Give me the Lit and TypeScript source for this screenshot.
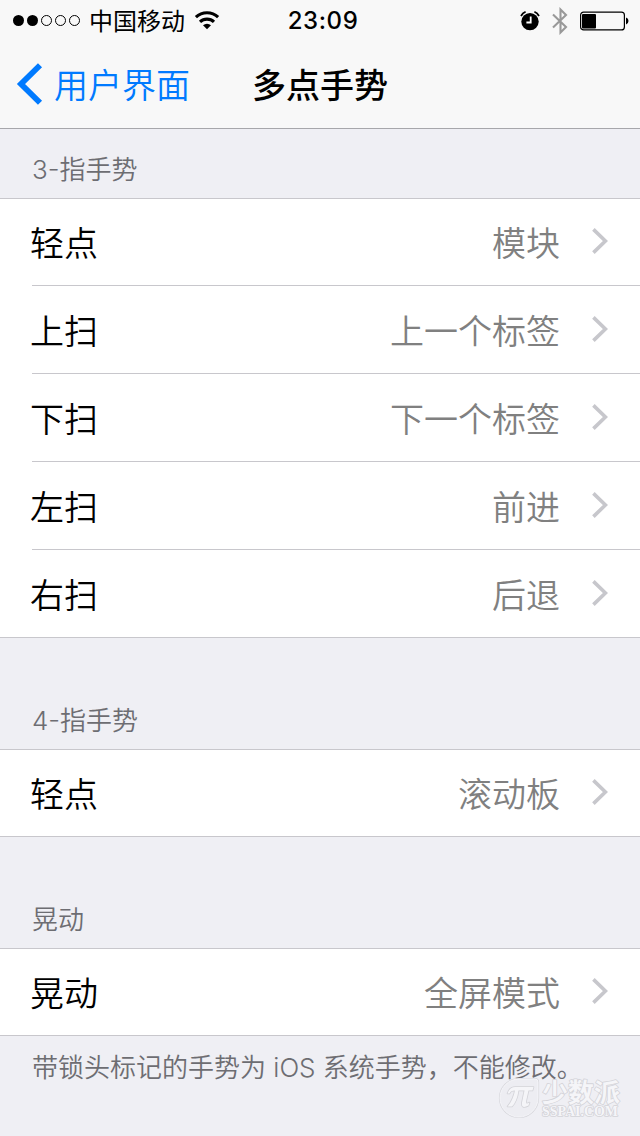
import { LitElement, html, css, svg } from "lit";
import { customElement, property } from "lit/decorators.js";

interface Gesture {
  label: string;
  value: string;
}

interface Section {
  title: string;
  rows: Gesture[];
  note?: string;
}

const SECTIONS: Section[] = [
  {
    title: "3-指手势",
    rows: [
      { label: "轻点", value: "模块" },
      { label: "上扫", value: "上一个标签" },
      { label: "下扫", value: "下一个标签" },
      { label: "左扫", value: "前进" },
      { label: "右扫", value: "后退" },
    ],
  },
  { title: "4-指手势", rows: [{ label: "轻点", value: "滚动板" }] },
  {
    title: "晃动",
    rows: [{ label: "晃动", value: "全屏模式" }],
    note: "带锁头标记的手势为 iOS 系统手势，不能修改。",
  },
];

@customElement("status-bar")
class StatusBar extends LitElement {
  static styles = css`
    :host {
      display: grid;
      grid-template-columns: 1fr auto 1fr;
      align-items: center;
      height: 40px;
      padding: 0 11px 0 13px;
      color: #000;
    }
    .left,
    .right {
      display: flex;
      align-items: center;
    }
    .right {
      justify-content: flex-end;
      padding-top: 1px;
    }
    svg {
      display: block;
      flex: none;
    }
    .carrier {
      margin: 0 9px 0 8px;
      font-size: 24px;
      line-height: 40px;
      white-space: nowrap;
    }
    .time {
      padding: 2px 0 0 4px;
      font-family: Inter, "Liberation Sans", sans-serif;
      font-size: 24px;
      font-weight: 500;
      line-height: 38px;
      letter-spacing: 0.6px;
    }
    .alarm {
      margin-right: 12px;
    }
    .bluetooth {
      margin-right: 12px;
    }
  `;

  render() {
    return html`
      <div class="left">
        <svg width="68" height="12" viewBox="0 0 68 12">
          ${[0, 1, 2, 3, 4].map((i) =>
            i < 2
              ? svg`<circle cx=${5.5 + i * 14} cy="6.5" r="5.5" />`
              : svg`<circle cx=${5.5 + i * 14} cy="6.5" r="5" fill="none" stroke="#000" />`
          )}
        </svg>
        <span class="carrier">中国移动</span>
        <svg width="26" height="20" viewBox="0 0 26 20">
          <g fill="none" stroke="#000" stroke-width="3.1">
            <path d="M1.9 7.2a16 16 0 0 1 22.2 0" />
            <path d="M6 11.9a10.2 10.2 0 0 1 14 0" />
          </g>
          <path d="M9 15.2a6 6 0 0 1 8 0L13 19.2z" />
        </svg>
      </div>
      <span class="time">23:09</span>
      <div class="right">
        <svg class="alarm" width="20" height="20" viewBox="0 0 20 20">
          <circle cx="10" cy="10.6" r="8.7" />
          <path d="M1 5a10 10 0 0 1 4.600-4.200M19 5a10 10 0 0 0-4.600-4.200" fill="none" stroke="#000" stroke-width="1.8" />
          <path d="M10.700 5.500v6H6.400" fill="none" stroke="#fff" stroke-width="1.8" />
        </svg>
        <svg class="bluetooth" width="16" height="28" viewBox="0 0 16 28">
          <path d="M1 7.500L14 20l-5.500 5.500V2.500L14 8 1 20.500" fill="none" stroke="#999" stroke-width="2.1" />
        </svg>
        <svg width="49" height="20" viewBox="0 0 49 20">
          <rect x="0.6" y="1.100" width="43.8" height="17.8" rx="3" fill="none" stroke="#000" stroke-width="1.2" />
          <rect x="2" y="3" width="14" height="14.5" rx="1" />
          <path d="M46 6.5a3.7 3.7 0 0 1 0 7z" />
        </svg>
      </div>
    `;
  }
}

@customElement("nav-bar")
class NavBar extends LitElement {
  static styles = css`
    :host {
      display: grid;
      grid-template-columns: 1fr auto 1fr;
      align-items: center;
      height: 88px;
      padding: 0 16px;
      font-size: 34px;
      line-height: 88px;
      white-space: nowrap;
    }
    .back {
      display: flex;
      align-items: center;
      gap: 11px;
      font-weight: 350;
      color: #007aff;
    }
    svg {
      display: block;
    }
    .title {
      font-weight: 500;
      color: #000;
    }
  `;

  @property() back = "";
  @property() heading = "";

  render() {
    return html`
      <div class="back">
        <svg width="27" height="42" viewBox="0 0 27 42">
          <path d="M24 2.200L5 21l19 18.800" fill="none" stroke="currentColor" stroke-width="5.8" />
        </svg>
        <span>${this.back}</span>
      </div>
      <span class="title">${this.heading}</span>
    `;
  }
}

@customElement("gesture-section")
class GestureSection extends LitElement {
  static styles = css`
    :host {
      display: block;
    }
    .title {
      padding-left: 32px;
      font-size: 26px;
      line-height: 38px;
      color: #6d6d72;
    }
    .title,
    .note {
      font-family: Inter, "Noto Sans CJK SC", sans-serif;
      font-weight: 350;
    }
    .rows {
      margin-top: 9px;
      box-sizing: border-box;
      border-top: 1px solid #c8c7cc;
      border-bottom: 1px solid #c8c7cc;
      background: #fff;
    }
    .row {
      display: flex;
      align-items: center;
      box-sizing: border-box;
      height: 88px;
      margin-left: 32px;
      padding-right: 32px;
      border-bottom: 1px solid #c8c7cc;
      font-size: 34px;
      line-height: 86px;
    }
    .row:first-child {
      height: 87px;
    }
    .row:last-child {
      height: 87px;
      border-bottom: 0;
    }
    .row:only-child {
      height: 86px;
    }
    .label {
      flex: 1;
      margin-left: -2px;
      font-weight: 350;
      color: #000;
    }
    .value {
      margin-right: 32px;
      font-weight: 350;
      color: #808080;
    }
    svg {
      display: block;
      margin-bottom: 2px;
    }
    .note {
      padding: 13px 0 0 32px;
      font-size: 26px;
      line-height: 38px;
      color: #6d6d72;
      white-space: nowrap;
    }
  `;

  @property({ attribute: false }) section!: Section;

  render() {
    const { title, rows, note } = this.section;
    return html`
      <div class="title">${title}</div>
      <div class="rows">
        ${rows.map(
          (r) => html`
            <div class="row">
              <span class="label">${r.label}</span>
              <span class="value">${r.value}</span>
              <svg width="16" height="26" viewBox="0 0 16 26">
                <path d="M1.4 1.4L13.4 13l-12 11.6" fill="none" stroke="#c7c7cc" stroke-width="3.6" />
              </svg>
            </div>
          `
        )}
      </div>
      ${note ? html`<div class="note">${note}</div>` : null}
    `;
  }
}

@customElement("site-watermark")
class SiteWatermark extends LitElement {
  static styles = css`
    :host {
      display: block;
    }
    svg {
      display: block;
      overflow: visible;
    }
    .mark {
      fill: #f5f5f8;
      stroke: #d3d3d8;
      stroke-width: 1.6px;
      stroke-linejoin: round;
      paint-order: stroke;
    }
    .badge {
      fill: #ededf2;
      stroke: #d6d6db;
      stroke-width: 2.2px;
    }
    .rim {
      fill: none;
      stroke: #f6f6f9;
      stroke-width: 0.9px;
    }
    .name {
      font: 700 26px "Noto Sans CJK SC", sans-serif;
    }
    .site {
      font: 700 14px "Liberation Serif", serif;
    }
  `;

  render() {
    const outline = "M20 3H36Q39 3 39 6V22A19 19 0 1 1 20 3Z";
    return html`
      <svg width="126" height="44" viewBox="0 0 126 44">
        <g class="mark">
          <path class="badge" d=${outline} />
          <path class="rim" d=${outline} />
          <path
            d="M8.500 17.500Q10.500 11 16.500 11H34.500L33.500 14.500H29.500L27 25.500Q26.500 29 30.500 26.500L29.500 29.500Q22 33.500 23 26.500L25.500 14.500H19.500Q18 25.500 13 30.500H8.500Q14 24.500 16 14.500Q11.500 14.500 10.500 17.500Z"
          />
          <text class="name" x="43" y="26" textLength="78" lengthAdjust="spacingAndGlyphs">少数派</text>
          <text class="site" x="43" y="39.500" textLength="76" lengthAdjust="spacingAndGlyphs">SSPAI.COM</text>
        </g>
      </svg>
    `;
  }
}

@customElement("app-root")
class AppRoot extends LitElement {
  static styles = css`
    :host {
      display: block;
      position: relative;
      box-sizing: border-box;
      height: 1136px;
      overflow: hidden;
      background: #efeff4;
      font-family: "Noto Sans CJK SC", sans-serif;
    }
    .top {
      border-bottom: 1px solid #a7a7ab;
      background: #f8f8f8;
    }
    .content {
      display: flex;
      flex-direction: column;
      gap: 64px;
      padding-top: 22px;
    }
    .watermark {
      position: absolute;
      right: 15px;
      bottom: 16px;
    }
  `;

  render() {
    return html`
      <div class="top">
        <status-bar></status-bar>
        <nav-bar back="用户界面" heading="多点手势"></nav-bar>
      </div>
      <div class="content">
        ${SECTIONS.map((s) => html`<gesture-section .section=${s}></gesture-section>`)}
      </div>
      <site-watermark class="watermark"></site-watermark>
    `;
  }
}
